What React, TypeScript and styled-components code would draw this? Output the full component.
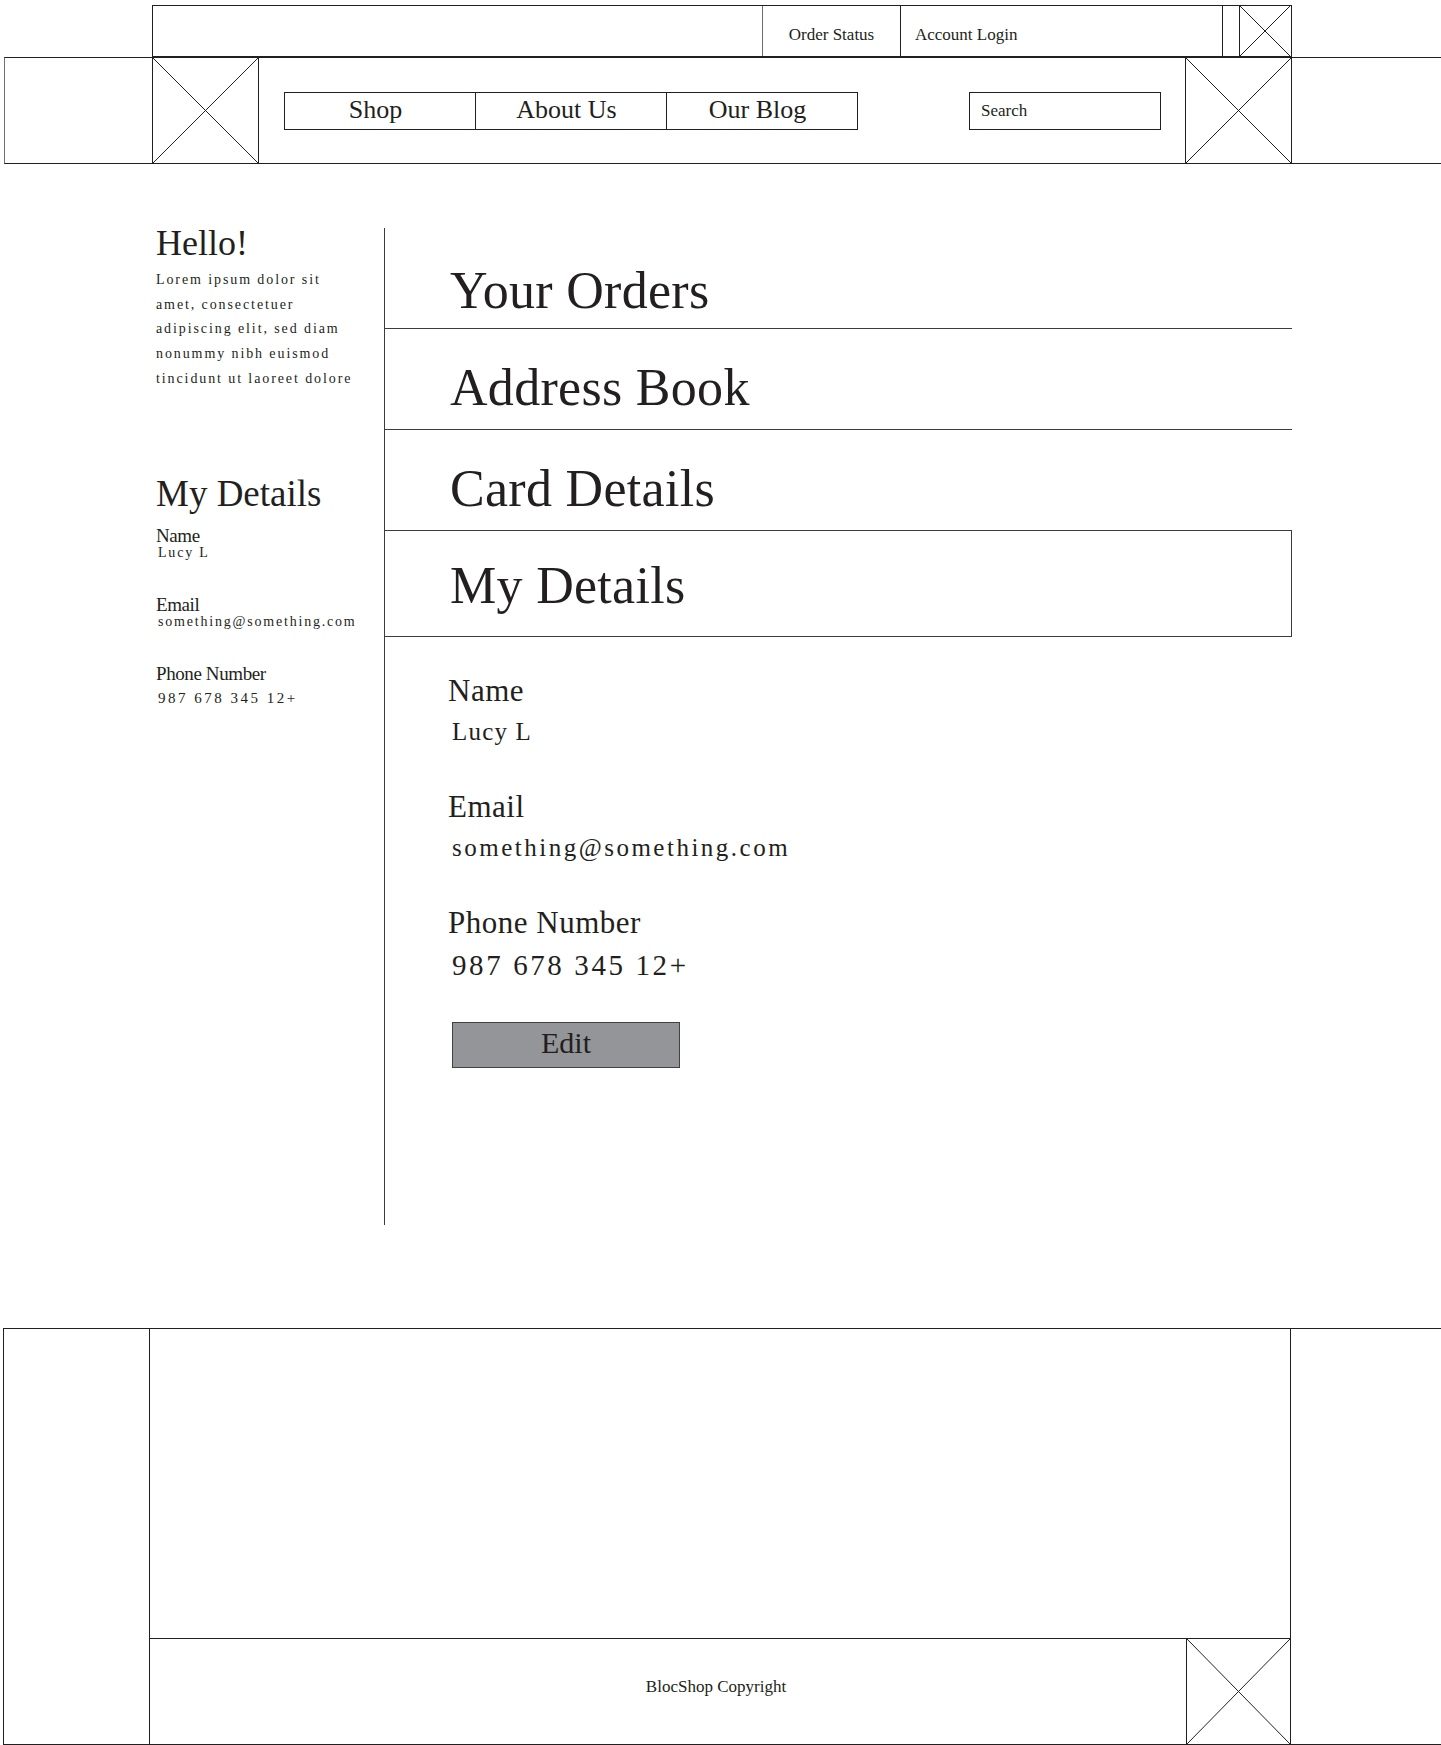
import React from "react";
import styled, { createGlobalStyle } from "styled-components";

const INK = "#231f20";
const GREY = "#6d6e71";

const GlobalStyle = createGlobalStyle`
  html, body {
    margin: 0;
    padding: 0;
    background: #fff;
  }
  body {
    font-family: "Liberation Serif", "Times New Roman", serif;
    color: ${INK};
    overflow: hidden;
  }
  * {
    box-sizing: border-box;
  }
`;

const Page = styled.div`
  width: 1441px;
  height: 1745px;
  padding-top: 5px;
  display: flex;
  flex-direction: column;
`;

/* ---------- placeholder image (crossed box) ---------- */

const Frame = styled.div<{ $w: number }>`
  width: ${({ $w }) => $w}px;
  flex: none;
  align-self: stretch;
  border-left: 1px solid ${INK};
  border-right: 1px solid ${({ $w }) => ($w > 60 ? INK : "transparent")};
  display: flex;

  svg {
    width: 100%;
    height: 100%;
    display: block;
  }
`;

const ImageStub = ({ w }: { w: number }) => (
  <Frame $w={w}>
    <svg viewBox="0 0 100 100" preserveAspectRatio="none">
      <line x1="0" y1="0" x2="100" y2="100" stroke={INK} strokeWidth="1" vectorEffect="non-scaling-stroke" />
      <line x1="100" y1="0" x2="0" y2="100" stroke={INK} strokeWidth="1" vectorEffect="non-scaling-stroke" />
    </svg>
  </Frame>
);

/* ---------- header ---------- */

const TopBar = styled.div`
  margin-left: 152px;
  width: 1140px;
  height: 52px;
  border: 1px solid ${INK};
  display: flex;
`;

const TopSpacer = styled.div`
  flex: 1;
`;

const TopCell = styled.a<{ $boxed?: boolean }>`
  width: ${({ $boxed }) => ($boxed ? 139 : 322)}px;
  padding-top: 19px;
  padding-left: ${({ $boxed }) => ($boxed ? 0 : 14)}px;
  text-align: ${({ $boxed }) => ($boxed ? "center" : "left")};
  border-left: ${({ $boxed }) => ($boxed ? `1px solid ${GREY}` : "none")};
  border-right: 1px solid ${INK};
  font-size: 17px;
  color: ${INK};
  text-decoration: none;
`;

const TopGap = styled.div`
  width: 16px;
`;

const NavBand = styled.div`
  margin-left: 4px;
  height: 107px;
  border: 1px solid ${INK};
  border-left-color: ${GREY};
  border-right: none;
`;

const NavInner = styled.nav`
  margin-left: 147px;
  width: 1140px;
  height: 100%;
  display: flex;
  align-items: center;
`;

const NavLinks = styled.div`
  display: flex;
  margin-left: 25px;
`;

const NavItem = styled.a`
  width: 192px;
  height: 38px;
  padding: 0 9px 2px 0;
  border: 1px solid ${INK};
  display: flex;
  align-items: center;
  justify-content: center;
  font-size: 26px;
  color: ${INK};
  text-decoration: none;

  & + & {
    margin-left: -1px;
  }
`;

const Search = styled.input`
  margin-left: auto;
  margin-right: 24px;
  width: 192px;
  height: 38px;
  border: 1px solid ${INK};
  border-radius: 0;
  padding: 0 0 0 11px;
  font-family: inherit;
  font-size: 17px;
  color: ${INK};
  outline: none;

  &::placeholder {
    color: ${INK};
    opacity: 1;
  }
`;

/* ---------- main ---------- */

const Main = styled.main`
  margin: 64px 0 0 152px;
  width: 1140px;
  height: 997px;
  display: grid;
  grid-template-columns: 233px 1fr;
`;

const Sidebar = styled.aside`
  border-right: 1px solid #3c3c3c;
  padding-left: 4px;
`;

const Hello = styled.h2`
  margin: 0;
  font-size: 36px;
  font-weight: 400;
  line-height: 30px;
`;

const Blurb = styled.p`
  margin: 10px 0 0;
  font-size: 14px;
  line-height: 24.7px;
  letter-spacing: 1.9px;
`;

const SideTitle = styled.h3`
  margin: 82px 0 0;
  font-size: 37px;
  font-weight: 400;
  line-height: 40px;
`;

const SideField = styled.div`
  margin-top: 36px;

  &:first-of-type {
    margin-top: 14px;
  }
`;

const SideLabel = styled.div`
  font-size: 19px;
  line-height: 16px;
  letter-spacing: -0.4px;
`;

const SideValue = styled.div<{ $big?: boolean }>`
  margin-top: ${({ $big }) => ($big ? 8 : 1)}px;
  padding-left: 2px;
  font-size: ${({ $big }) => ($big ? 15 : 14)}px;
  line-height: 16px;
  letter-spacing: ${({ $big }) => ($big ? 2.5 : 1.8)}px;
`;

const Content = styled.section`
  display: flex;
  flex-direction: column;
`;

const Tab = styled.a<{ $active?: boolean }>`
  height: ${({ $active }) => ($active ? 106 : 101)}px;
  padding: ${({ $active }) => ($active ? 27 : 31)}px 0 0 65px;
  border-bottom: 1px solid #3c3c3c;
  border-right: ${({ $active }) => ($active ? "1px solid #3c3c3c" : "none")};
  font-size: 52px;
  line-height: 56px;
  letter-spacing: 0.3px;
  color: ${INK};
  text-decoration: none;

  &:first-child {
    padding-top: 35px;
  }
`;

const Details = styled.div`
  padding: 37px 0 0 63px;
`;

const Field = styled.div`
  & + & {
    margin-top: 44px;
  }
`;

const Label = styled.div`
  font-size: 31px;
  line-height: 34px;
  letter-spacing: 0.5px;
`;

const Value = styled.div<{ $size: number; $track: number }>`
  margin-top: 9px;
  padding-left: 4px;
  font-size: ${({ $size }) => $size}px;
  line-height: ${({ $size }) => $size + 4}px;
  letter-spacing: ${({ $track }) => $track}px;
`;

const EditButton = styled.button`
  margin: 40px 0 0 4px;
  width: 228px;
  height: 46px;
  padding: 0 0 4px;
  background: #939598;
  border: 1px solid #414042;
  border-radius: 0;
  font-family: inherit;
  font-size: 30px;
  line-height: 1;
  color: ${INK};
`;

/* ---------- footer ---------- */

const FooterBand = styled.footer`
  margin: 103px 0 0 3px;
  height: 417px;
  border: 1px solid ${INK};
  border-right: none;
`;

const FooterInner = styled.div`
  margin-left: 145px;
  width: 1142px;
  height: 100%;
  border-left: 1px solid ${INK};
  border-right: 1px solid ${INK};
  display: flex;
  flex-direction: column;
`;

const FooterBlank = styled.div`
  flex: 1;
`;

const FooterBar = styled.div`
  height: 106px;
  border-top: 1px solid ${INK};
  display: grid;
  grid-template-columns: 104px 1fr 104px;
`;

const Copyright = styled.div`
  grid-column: 2;
  display: flex;
  align-items: center;
  justify-content: center;
  padding: 0 8px 9px 0;
  font-size: 17px;
`;

const FooterStub = styled.div`
  grid-column: 3;
  display: flex;

  & > div {
    border-right: none;
  }
`;

const tabs = ["Your Orders", "Address Book", "Card Details", "My Details"];

export default function App() {
  return (
    <Page>
      <GlobalStyle />

      <TopBar>
        <TopSpacer />
        <TopCell $boxed href="#">Order Status</TopCell>
        <TopCell href="#">Account Login</TopCell>
        <TopGap />
        <ImageStub w={52} />
      </TopBar>

      <NavBand>
        <NavInner>
          <ImageStub w={107} />
          <NavLinks>
            <NavItem href="#">Shop</NavItem>
            <NavItem href="#">About Us</NavItem>
            <NavItem href="#">Our Blog</NavItem>
          </NavLinks>
          <Search placeholder="Search" />
          <ImageStub w={107} />
        </NavInner>
      </NavBand>

      <Main>
        <Sidebar>
          <Hello>Hello!</Hello>
          <Blurb>
            Lorem ipsum dolor sit
            <br />
            amet, consectetuer
            <br />
            adipiscing elit, sed diam
            <br />
            nonummy nibh euismod
            <br />
            tincidunt ut laoreet dolore
          </Blurb>

          <SideTitle>My Details</SideTitle>
          <SideField>
            <SideLabel>Name</SideLabel>
            <SideValue>Lucy L</SideValue>
          </SideField>
          <SideField>
            <SideLabel>Email</SideLabel>
            <SideValue>something@something.com</SideValue>
          </SideField>
          <SideField>
            <SideLabel>Phone Number</SideLabel>
            <SideValue $big>987 678 345 12+</SideValue>
          </SideField>
        </Sidebar>

        <Content>
          {tabs.map((t) => (
            <Tab key={t} href="#" $active={t === "My Details"}>
              {t}
            </Tab>
          ))}

          <Details>
            <Field>
              <Label>Name</Label>
              <Value $size={25} $track={1.2}>Lucy L</Value>
            </Field>
            <Field>
              <Label>Email</Label>
              <Value $size={25} $track={2.5}>something@something.com</Value>
            </Field>
            <Field>
              <Label>Phone Number</Label>
              <Value $size={29} $track={2.6}>987 678 345 12+</Value>
            </Field>
            <EditButton>Edit</EditButton>
          </Details>
        </Content>
      </Main>

      <FooterBand>
        <FooterInner>
          <FooterBlank />
          <FooterBar>
            <Copyright>BlocShop Copyright</Copyright>
            <FooterStub>
              <ImageStub w={104} />
            </FooterStub>
          </FooterBar>
        </FooterInner>
      </FooterBand>
    </Page>
  );
}
